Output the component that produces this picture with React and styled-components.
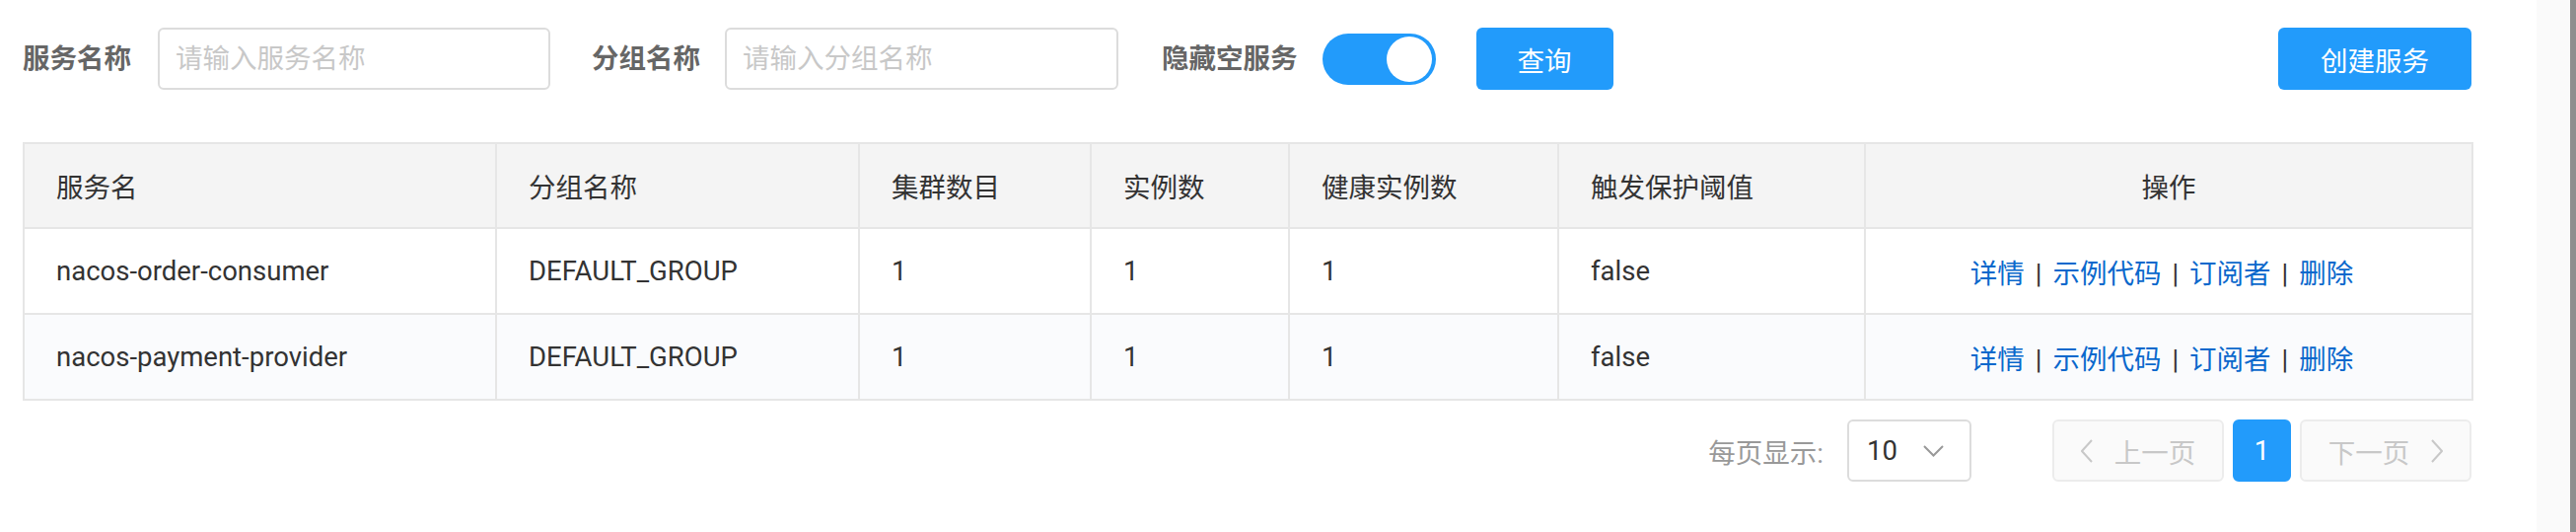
import styled, { createGlobalStyle } from "styled-components";

const GlobalStyle = createGlobalStyle`
  html, body {
    margin: 0;
    padding: 0;
    background: #fff;
  }
  body {
    font-family: Roboto, "Noto Sans CJK SC", sans-serif;
    color: #333;
  }
`;

const Page = styled.div`
  display: flex;
  width: 2612px;
  height: 539px;
  overflow: hidden;
`;

const Main = styled.main`
  flex: 1;
  padding: 28px 66px 0 23px;
  min-width: 0;
`;

const Gutter = styled.div`
  width: 34px;
  background: #fafafa;
  border-right: 6px solid #8e8e8e;
`;

const Toolbar = styled.div`
  display: flex;
  align-items: center;
  height: 63px;
`;

const Field = styled.div`
  display: flex;
  align-items: center;
  gap: ${(p) => p.$gap || 26}px;
  margin-left: ${(p) => p.$offset || 0}px;
`;

const Label = styled.span`
  font-size: 27.5px;
  line-height: 1;
  font-weight: 700;
  color: #666;
  white-space: nowrap;
`;

const TextInput = styled.input`
  box-sizing: border-box;
  width: ${(p) => p.$width}px;
  height: 63px;
  padding: 0 16px;
  border: 2px solid #dcdcdc;
  border-radius: 6px;
  font-family: inherit;
  font-size: 27.5px;
  color: #333;
  outline: none;
  &::placeholder {
    color: #c8c8c8;
  }
`;

const Switch = styled.div`
  position: relative;
  width: 115px;
  height: 52px;
  border-radius: 26px;
  background: #229bfb;
  &::after {
    content: "";
    position: absolute;
    top: 3px;
    right: 4px;
    width: 46px;
    height: 46px;
    border-radius: 50%;
    background: #fff;
  }
`;

const Button = styled.button`
  box-sizing: border-box;
  width: ${(p) => p.$width}px;
  height: 63px;
  margin-left: ${(p) => (p.$push ? "auto" : `${p.$offset || 0}px`)};
  border: none;
  border-radius: 6px;
  background: #229bfb;
  color: #fff;
  font-family: inherit;
  font-size: 27.5px;
  cursor: pointer;
`;

const Table = styled.table`
  width: 2483px;
  margin-top: 53px;
  border-collapse: collapse;
  table-layout: fixed;
  border: 2px solid #e6e6e6;
  font-size: 27.5px;
`;

const HeadCell = styled.th`
  height: 84px;
  padding: 0 32px;
  background: #f4f4f4;
  border: 2px solid #e6e6e6;
  font-weight: 400;
  color: #333;
  text-align: ${(p) => (p.$center ? "center" : "left")};
`;

const Row = styled.tr`
  background: ${(p) => (p.$alt ? "#fafbfd" : "#fff")};
`;

const Cell = styled.td`
  height: 85px;
  padding: ${(p) => (p.$center ? "0 46px 0 32px" : "0 32px")};
  border: 2px solid #e6e6e6;
  color: #333;
  white-space: nowrap;
  text-align: ${(p) => (p.$center ? "center" : "left")};
`;

const Link = styled.a`
  color: #0a68cc;
  text-decoration: none;
  cursor: pointer;
`;

const Sep = styled.span`
  margin: 0 11px;
  color: #333;
`;

const Pager = styled.div`
  display: flex;
  justify-content: flex-end;
  align-items: center;
  height: 63px;
  margin-top: 19px;
`;

const PagerLabel = styled.span`
  font-size: 27.5px;
  color: #999;
  margin-right: 24px;
`;

const Select = styled.div`
  box-sizing: border-box;
  width: 126px;
  height: 63px;
  display: flex;
  align-items: center;
  justify-content: space-between;
  padding: 0 26px 0 18px;
  border: 2px solid #dcdcdc;
  border-radius: 6px;
  font-size: 27.5px;
  color: #333;
  margin-right: 82px;
`;

const PageButton = styled.button`
  box-sizing: border-box;
  width: ${(p) => (p.$active ? 59 : 174)}px;
  height: 63px;
  margin-left: ${(p) => (p.$first ? 0 : 9)}px;
  display: flex;
  align-items: center;
  justify-content: center;
  gap: 22px;
  border: 2px solid ${(p) => (p.$active ? "#229bfb" : "#ececec")};
  border-radius: 6px;
  background: ${(p) => (p.$active ? "#229bfb" : "#fafafa")};
  color: ${(p) => (p.$active ? "#fff" : "#c8c8c8")};
  font-family: inherit;
  font-size: 27.5px;
  padding: 0;
`;

const Chevron = ({ dir = "down", color = "#999", w = 21, h = 12 }) => {
  const paths = {
    down: "M1 1 L10.5 10.5 L20 1",
    left: "M11 1 L1 12 L11 23",
    right: "M1 1 L11 12 L1 23",
  };
  return (
    <svg width={w} height={h} viewBox={`0 0 ${w} ${h}`} fill="none">
      <path d={paths[dir]} stroke={color} strokeWidth="2" />
    </svg>
  );
};

const columns = [
  { title: "服务名", width: 479 },
  { title: "分组名称", width: 368 },
  { title: "集群数目", width: 235 },
  { title: "实例数", width: 201 },
  { title: "健康实例数", width: 273 },
  { title: "触发保护阈值", width: 311 },
  { title: "操作", width: 616, center: true },
];

const services = [
  { name: "nacos-order-consumer", group: "DEFAULT_GROUP", clusters: 1, instances: 1, healthy: 1, threshold: "false" },
  { name: "nacos-payment-provider", group: "DEFAULT_GROUP", clusters: 1, instances: 1, healthy: 1, threshold: "false" },
];

const actions = ["详情", "示例代码", "订阅者", "删除"];

const App = () => {
  return (
    <Page>
      <GlobalStyle />
      <Main>
        <Toolbar>
          <Field $gap={27}>
            <Label>服务名称</Label>
            <TextInput $width={398} placeholder="请输入服务名称" />
          </Field>
          <Field $gap={25} $offset={42}>
            <Label>分组名称</Label>
            <TextInput $width={399} placeholder="请输入分组名称" />
          </Field>
          <Field $gap={25} $offset={44}>
            <Label>隐藏空服务</Label>
            <Switch />
          </Field>
          <Button $width={139} $offset={41}>查询</Button>
          <Button $width={196} $push>创建服务</Button>
        </Toolbar>

        <Table>
          <colgroup>
            {columns.map((c) => (
              <col key={c.title} style={{ width: c.width }} />
            ))}
          </colgroup>
          <thead>
            <tr>
              {columns.map((c) => (
                <HeadCell key={c.title} $center={c.center}>{c.title}</HeadCell>
              ))}
            </tr>
          </thead>
          <tbody>
            {services.map((s, i) => (
              <Row key={s.name} $alt={i % 2 === 1}>
                <Cell>{s.name}</Cell>
                <Cell>{s.group}</Cell>
                <Cell>{s.clusters}</Cell>
                <Cell>{s.instances}</Cell>
                <Cell>{s.healthy}</Cell>
                <Cell>{s.threshold}</Cell>
                <Cell $center>
                  {actions.map((a, j) => (
                    <span key={a}>
                      {j > 0 && <Sep>|</Sep>}
                      <Link>{a}</Link>
                    </span>
                  ))}
                </Cell>
              </Row>
            ))}
          </tbody>
        </Table>

        <Pager>
          <PagerLabel>每页显示:</PagerLabel>
          <Select>
            <span>10</span>
            <Chevron dir="down" color="#999" />
          </Select>
          <PageButton $first>
            <Chevron dir="left" color="#c8c8c8" w={12} h={24} />
            <span>上一页</span>
          </PageButton>
          <PageButton $active>1</PageButton>
          <PageButton>
            <span>下一页</span>
            <Chevron dir="right" color="#c8c8c8" w={12} h={24} />
          </PageButton>
        </Pager>
      </Main>
      <Gutter />
    </Page>
  );
};

export default App;
